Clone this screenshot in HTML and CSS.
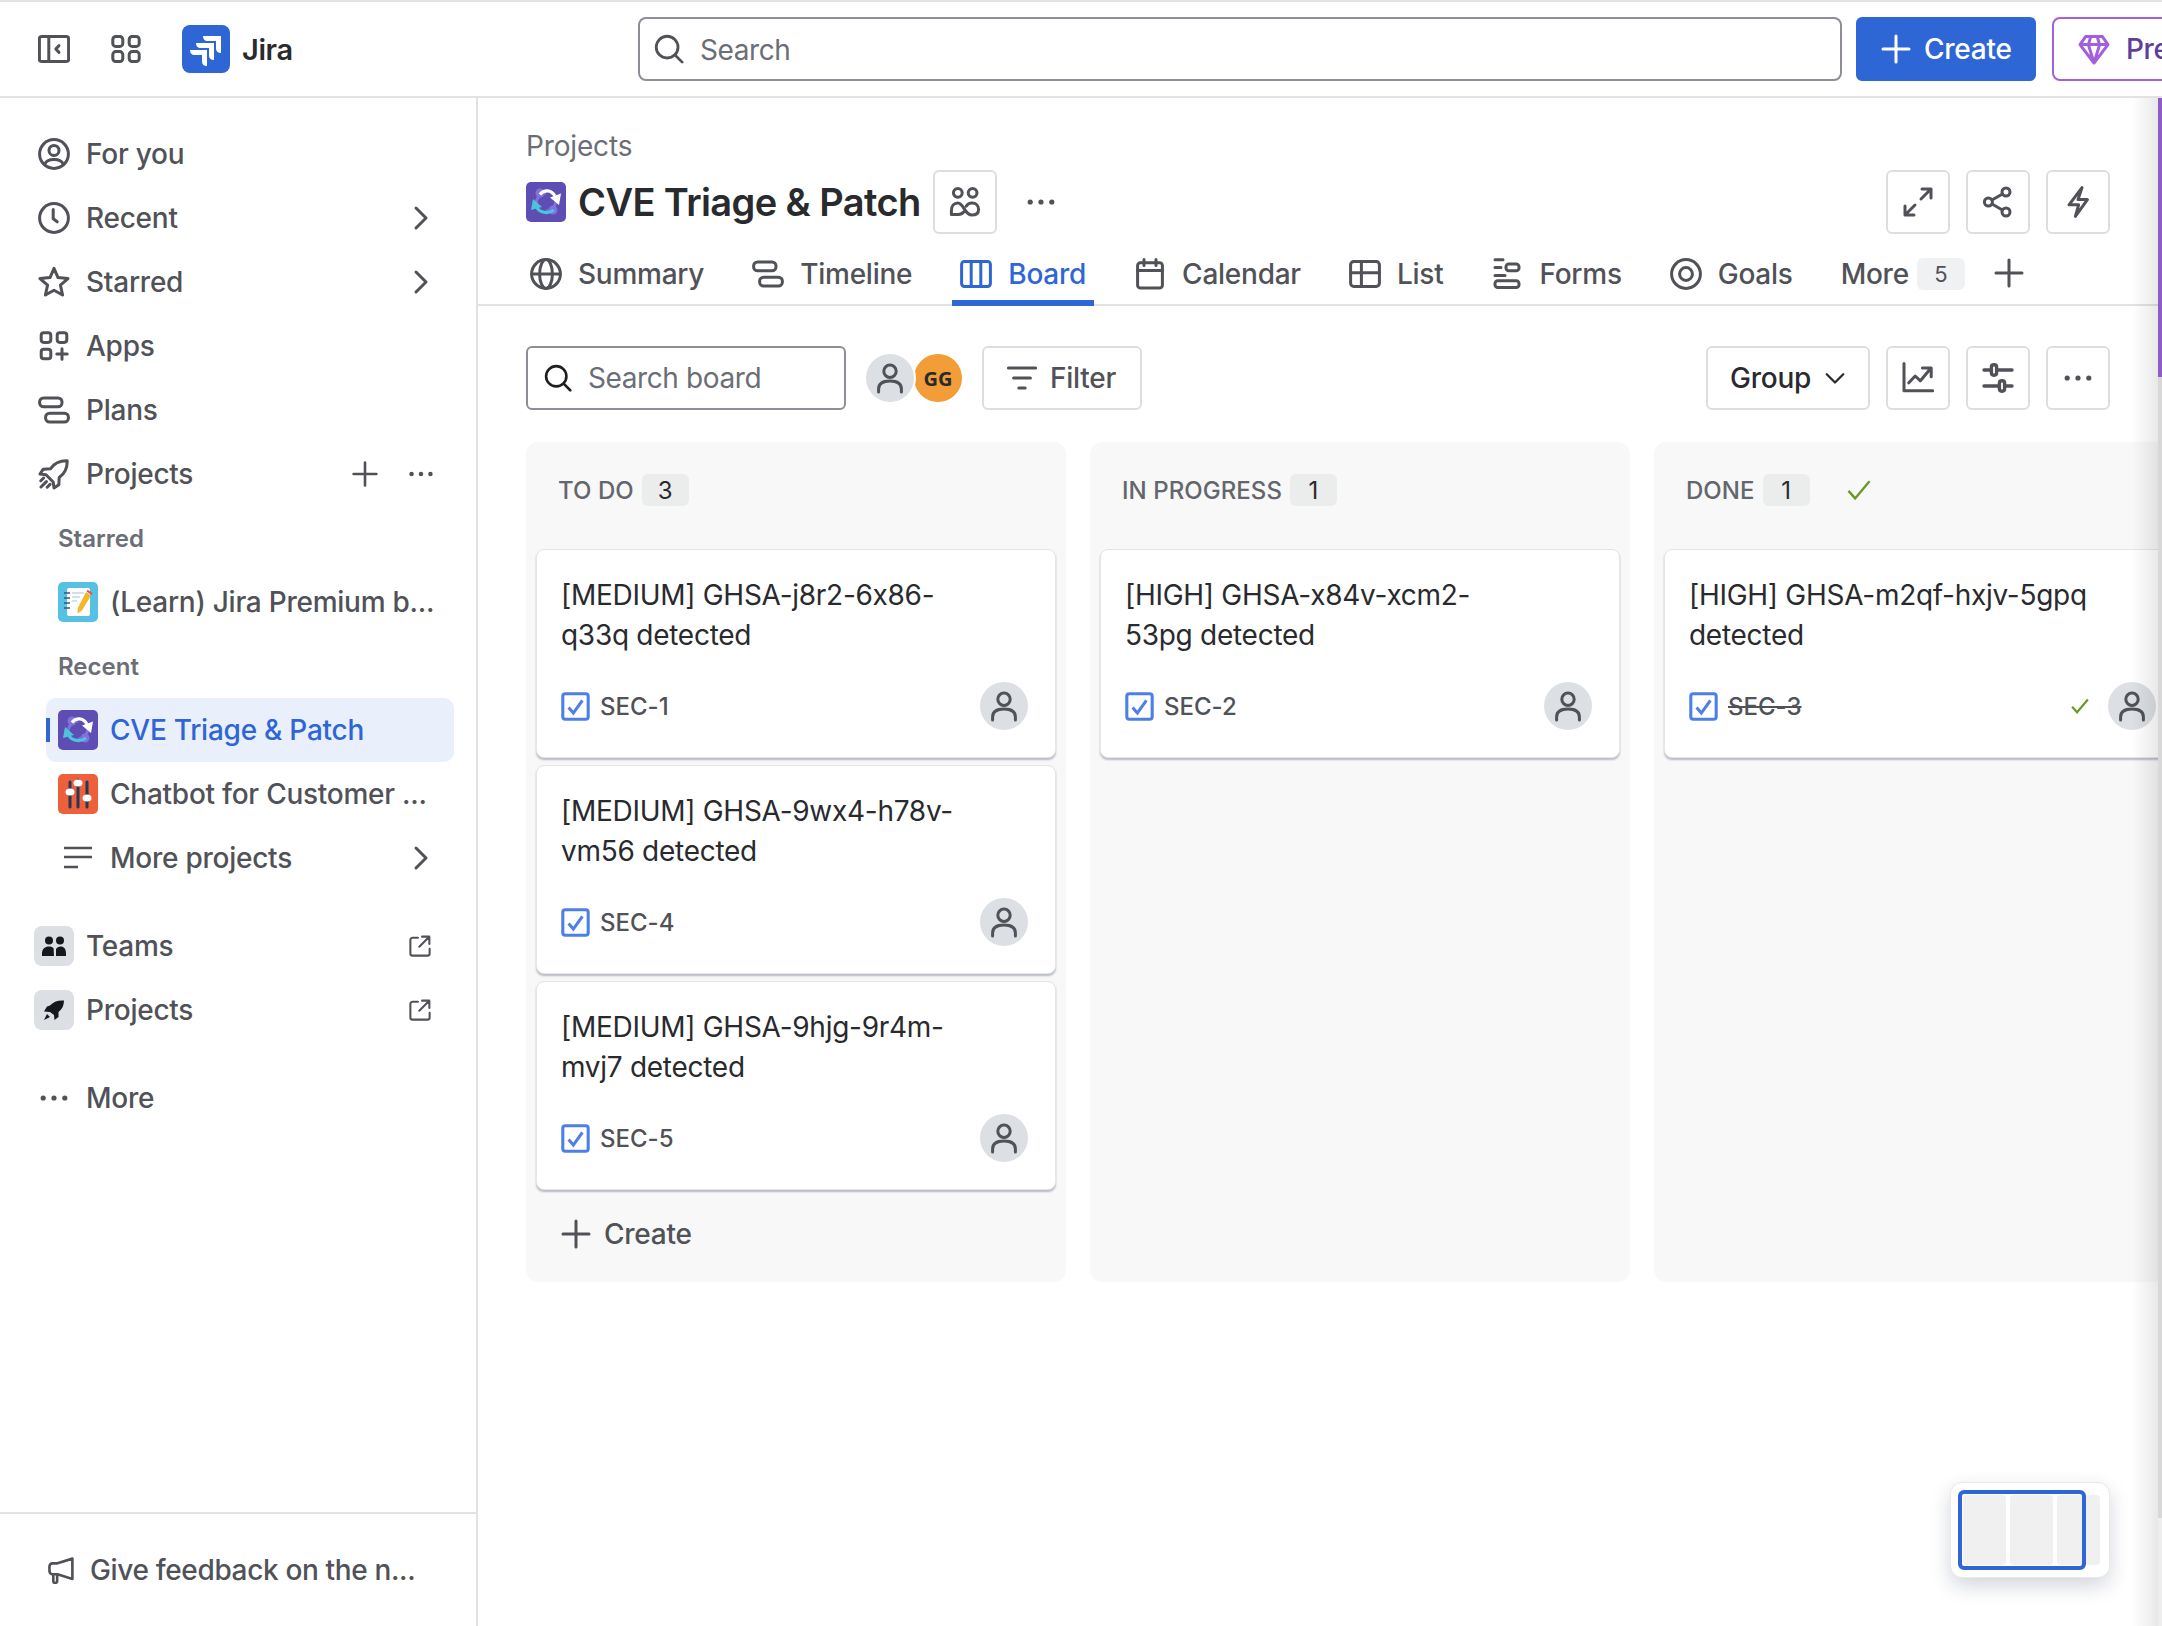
FILE: index.html
```html
<!DOCTYPE html>
<html lang="en">
<head>
    <meta charset="UTF-8">
    <meta name="viewport" content="width=device-width, initial-scale=1.0">
    <title>CVE Triage &amp; Patch - Board - Jira</title>
    <link rel="stylesheet" href="styles.css">
</head>
<body>
    <!-- icon sprite -->
    <svg class="sprite" xmlns="http://www.w3.org/2000/svg">
        <symbol id="i-panel" viewBox="0 0 16 16"><rect x=".7" y="1.7" width="14.6" height="12.6" rx="1.2"/><path d="M5.4 1.700v12.600M10.500 6.300 8.900 8l1.600 1.700"/></symbol>
        <symbol id="i-apps" viewBox="0 0 16 16"><rect x="1.4" y="1.7" width="5" height="5" rx="1.5"/><rect x="9.6" y="1.7" width="5" height="5" rx="1.5"/><rect x="1.4" y="9.3" width="5" height="5" rx="1.5"/><rect x="9.6" y="9.3" width="5" height="5" rx="1.5"/></symbol>
        <symbol id="i-foryou" viewBox="0 0 16 16"><circle cx="8" cy="8" r="7.2"/><circle cx="8" cy="6.2" r="2.5"/><path d="M3.4 13.2c.6-1.8 2.4-2.4 4.6-2.4s4 .6 4.6 2.4"/></symbol>
        <symbol id="i-clock" viewBox="0 0 16 16"><circle cx="8" cy="8" r="7.2"/><path d="M7.6 3.8v4.6l2 1.5"/></symbol>
        <symbol id="i-star" viewBox="0 0 16 16"><path d="M8 1.2l2 4.6 5 .5-3.800 3.300 1.100 4.900L8 12.100l-4.300 2.400 1.100-4.900L1 6.300l5-.5z"/></symbol>
        <symbol id="i-appsadd" viewBox="0 0 16 16"><rect x="1.6" y="1.4" width="4.8" height="4.8" rx="1.3"/><rect x="9.6" y="1.4" width="4.8" height="4.8" rx="1.3"/><rect x="1.6" y="9.6" width="4.8" height="4.8" rx="1.3"/><path d="M12 9.4v5.200M9.400 12h5.200"/></symbol>
        <symbol id="i-plans" viewBox="0 0 16 16"><rect x=".8" y="2" width="11.2" height="4.4" rx="2"/><rect x="3.8" y="9.6" width="11.4" height="4.4" rx="2"/></symbol>
        <symbol id="i-rocket" viewBox="0 0 16 16"><path d="M6.200 5.400C8 2.800 11 1.300 14.600 1.400c.1 3.600-1.400 6.600-4 8.400l-.2 3.600-2.400 1.600-.4-3-3.600-3.600-3-.4 1.600-2.400zM1.500 14.500l2.700-2.700M4.600 14.600l1.400-1.400M1.400 11.400l1.400-1.400"/></symbol>
        <symbol id="i-chev" viewBox="0 0 16 16"><path d="M5.500 3l5 5-5 5"/></symbol>
        <symbol id="i-chevdown" viewBox="0 0 16 16"><path d="M2.500 5.500 8 11l5.500-5.500"/></symbol>
        <symbol id="i-plus" viewBox="0 0 16 16"><path d="M8 1.500v13M1.500 8h13"/></symbol>
        <symbol id="i-dots" viewBox="0 0 16 16"><g class="solid"><circle cx="2.6" cy="8" r="1.3"/><circle cx="8" cy="8" r="1.3"/><circle cx="13.4" cy="8" r="1.3"/></g></symbol>
        <symbol id="i-globe" viewBox="0 0 16 16"><circle cx="8" cy="8" r="7.2"/><ellipse cx="8" cy="8" rx="3.2" ry="7.2"/><path d="M1 8h14"/></symbol>
        <symbol id="i-columns" viewBox="0 0 16 16"><rect x=".8" y="1.8" width="14.4" height="12.4" rx="1.4"/><path d="M5.600 1.800v12.400M10.400 1.800v12.400"/></symbol>
        <symbol id="i-calendar" viewBox="0 0 16 16"><rect x="1.8" y="2.4" width="12.4" height="12.6" rx="1.4"/><path d="M1.800 6.200h12.400M5 .8v3M11 .8v3"/></symbol>
        <symbol id="i-list" viewBox="0 0 16 16"><rect x=".8" y="1.8" width="14.4" height="12.4" rx="1.6"/><path d="M.8 7.400h14.400M6.200 1.800v12.400"/></symbol>
        <symbol id="i-forms" viewBox="0 0 16 16"><path d="M2 .9h4M2 4.700h3M2 8.800h5"/><rect x="7.5" y="3" width="6.5" height="3.4" rx="1.4"/><rect x="2" y="11.4" width="12" height="3.4" rx="1.4"/></symbol>
        <symbol id="i-goals" viewBox="0 0 16 16"><circle cx="8" cy="8" r="7.2"/><circle cx="8" cy="8" r="3.2"/></symbol>
        <symbol id="i-people" viewBox="0 0 16 16"><circle cx="4.4" cy="3.4" r="2.2"/><circle cx="11.8" cy="3.4" r="2.2"/><path d="M1.200 14.200v-1.800c0-2.500 1.300-3.900 3.200-3.900 3 0 3.400 6 7 6 2.200 0 3.400-1.100 3.400-2.800 0-1.900-1.400-3.200-3.300-3.200-1.300 0-2.300.6-2.900 1.600M1.200 14.200h3.600c1 0 1.900-.4 2.500-1.200"/></symbol>
        <symbol id="i-expand" viewBox="0 0 16 16"><path d="M9.500 6.500l5-5M10 1.500h4.500V6M6.500 9.500l-5 5M1.500 10v4.500H6"/></symbol>
        <symbol id="i-share" viewBox="0 0 16 16"><circle cx="3.2" cy="8" r="2"/><circle cx="12" cy="3" r="2"/><circle cx="12" cy="13" r="2"/><path d="M5 7l5.200-3M5 9l5.200 3"/></symbol>
        <symbol id="i-bolt" viewBox="0 0 16 16"><path d="M10 .8 3.500 9.400h4.800l-1.600 5.800 6-8.400H8z"/></symbol>
        <symbol id="i-search" viewBox="0 0 16 16"><circle cx="7" cy="7" r="5.8"/><path d="M11.200 11.200 15 15"/></symbol>
        <symbol id="i-filter" viewBox="0 0 16 16"><path d="M1.200 3h13.600M3.800 8h8.400M6.400 13h3.200"/></symbol>
        <symbol id="i-chart" viewBox="0 0 16 16"><path d="M1 .8v13.600h14.400M3.400 10.400 6.600 7l2.600 2.400L14 3.600M10.200 3h4.400v4.400"/></symbol>
        <symbol id="i-sliders" viewBox="0 0 16 16"><path d="M1 4h3.500M7.500 4H15M1 12h7.500M11.500 12H15"/><rect x="4.7" y="1.4" width="2.6" height="5.2" rx="1.2"/><rect x="8.7" y="9.4" width="2.6" height="5.2" rx="1.2"/></symbol>
        <symbol id="i-person" viewBox="0 0 16 16"><circle cx="8" cy="4.6" r="3.1"/><path d="M2.300 15v-1.500c0-2.600 2-4 5.700-4s5.700 1.400 5.700 4V15"/></symbol>
        <symbol id="i-external" viewBox="0 0 16 16"><path d="M6.500 2H2.600A1.600 1.600 0 0 0 1 3.600v9.800A1.600 1.600 0 0 0 2.600 15h10.800a1.600 1.600 0 0 0 1.600-1.600V10M7.500 8.500 14.500 1.500M9.500 1.200h5.300v5.300"/></symbol>
        <symbol id="i-megaphone" viewBox="0 0 16 16"><path d="M14.500 1.500v11.600L6 10.400H3.200a1.800 1.800 0 0 1-1.800-1.800V6a1.800 1.800 0 0 1 1.800-1.800H6zM3.600 10.400v3.900a1 1 0 0 0 2.200 0v-3.900"/></symbol>
        <symbol id="i-diamond" viewBox="0 0 16 16"><path d="M3.800 1.800h8.400L15 5.800 8 15 1 5.800zM1 5.800h14M5.200 5.800 8 15l2.800-9.200M5.200 5.800 6.400 1.800M10.800 5.800 9.600 1.800"/></symbol>
        <symbol id="i-task" viewBox="0 0 16 16"><rect x="1" y="1" width="14" height="14" rx="1.4"/><path d="M4.200 8.600l2.600 3L11.800 4.600"/></symbol>
        <symbol id="i-check" viewBox="0 0 16 16"><path d="M1 8.600l4.400 5L15 2.200"/></symbol>

        <symbol id="logo-sync" viewBox="0 0 40 40">
            <rect width="40" height="40" rx="5" fill="#5e4db2"/>
            <circle cx="14" cy="11" r="4.500" fill="#8270db"/><circle cx="27" cy="28" r="4.500" fill="#8270db"/>
            <path d="M10 22c0-6 5-11 10-11" fill="none" stroke="#8270db" stroke-width="3"/>
            <path d="M30 18c0 6-5 11-10 11" fill="none" stroke="#8270db" stroke-width="3"/>
            <path d="M14 12.500C18 7.500 25 7.500 29 14" fill="none" stroke="#fff" stroke-width="3.200"/>
            <path d="M24 15.500 35 11.500 33 23z" fill="#fff"/>
            <path d="M28 28C23 32 14 31.500 10.500 25" fill="none" stroke="#4bc4dc" stroke-width="3.200"/>
            <path d="M7 17 5 28 16 25z" fill="#4bc4dc"/>
        </symbol>
    </svg>

    <header class="topbar">
        <div class="topbar-left">
            <svg class="ico"><use href="#i-panel"/></svg>
            <svg class="ico"><use href="#i-apps"/></svg>
            <div class="brand">
                <svg class="brand-logo" viewBox="0 0 48 48">
                    <rect width="48" height="48" rx="8" fill="#2f66d5"/>
                    <path d="M21 11h18v17c-2.800 0-5-1.500-5-4.500V16H25.500C23 16 21 14 21 11z" fill="#fff"/>
                    <path d="M14 18h18v17c-2.800 0-5-1.500-5-4.500V23h-8.500C16 23 14 21 14 18z" fill="#fff"/>
                    <path d="M8 25h17v16c-2.800 0-5-1.500-5-4.500V30h-7.500C10 30 8 28 8 25z" fill="#fff"/>
                </svg>
                <span class="brand-name">Jira</span>
            </div>
        </div>
        <div class="global-search">
            <svg class="ico ico-search"><use href="#i-search"/></svg>
            <span>Search</span>
        </div>
        <button class="create-btn"><svg class="ico"><use href="#i-plus"/></svg>Create</button>
        <button class="premium-btn"><svg class="ico"><use href="#i-diamond"/></svg>Premium</button>
    </header>

    <div class="layout">
        <aside class="sidebar">
            <nav class="side-nav">
                <a class="side-row"><svg class="ico"><use href="#i-foryou"/></svg><span>For you</span></a>
                <a class="side-row"><svg class="ico"><use href="#i-clock"/></svg><span>Recent</span><svg class="ico side-end"><use href="#i-chev"/></svg></a>
                <a class="side-row"><svg class="ico"><use href="#i-star"/></svg><span>Starred</span><svg class="ico side-end"><use href="#i-chev"/></svg></a>
                <a class="side-row"><svg class="ico"><use href="#i-appsadd"/></svg><span>Apps</span></a>
                <a class="side-row"><svg class="ico"><use href="#i-plans"/></svg><span>Plans</span></a>
                <a class="side-row"><svg class="ico"><use href="#i-rocket"/></svg><span>Projects</span>
                    <svg class="ico ico-28 side-add"><use href="#i-plus"/></svg>
                    <svg class="ico ico-28 side-more"><use href="#i-dots"/></svg>
                </a>

                <div class="side-label">Starred</div>
                <a class="side-row sub">
                    <svg class="proj-logo" viewBox="0 0 40 40">
                        <rect width="40" height="40" rx="5" fill="#57c1e3"/>
                        <rect x="9" y="6" width="23" height="28" rx="2" fill="#fff"/>
                        <path d="M6 11h6M6 16h6M6 21h6M6 26h6" stroke="#33567f" stroke-width="1.600"/>
                        <path d="M14 11h12M14 15h8M14 19h5" stroke="#c4d8ea" stroke-width="1.500"/>
                        <path d="M28 10l5 3.500-9 15-4.500 3 .3-5.500z" fill="#f5b62f"/>
                        <path d="M28.500 9.500l1.200-1.800 5 3.300-1.200 2z" fill="#e2574c"/>
                    </svg>
                    <span>(Learn) Jira Premium b...</span>
                </a>
                <div class="side-label">Recent</div>
                <a class="side-row sub active">
                    <svg class="proj-logo"><use href="#logo-sync"/></svg>
                    <span>CVE Triage &amp; Patch</span>
                </a>
                <a class="side-row sub">
                    <svg class="proj-logo" viewBox="0 0 40 40">
                        <rect width="40" height="40" rx="5" fill="#ee5f3c"/>
                        <path d="M12 8v25M20 6v27M29 8v25" stroke="#253858" stroke-width="3" stroke-linecap="round"/>
                        <ellipse cx="12" cy="18" rx="4.500" ry="3.500" fill="#fff"/>
                        <ellipse cx="20" cy="9" rx="4.500" ry="3.500" fill="#fff"/>
                        <ellipse cx="29" cy="24" rx="4.500" ry="3.500" fill="#fff"/>
                    </svg>
                    <span>Chatbot for Customer ...</span>
                </a>
                <a class="side-row sub more-projects">
                    <svg class="lines-ico" viewBox="0 0 28 24"><path d="M0 2h28M0 11h28M0 21h14"/></svg>
                    <span>More projects</span>
                    <svg class="ico side-end"><use href="#i-chev"/></svg>
                </a>

                <a class="side-row group-start">
                    <span class="tile">
                        <svg class="tile-ico" viewBox="0 0 24 20"><circle cx="7" cy="4.500" r="4"/><circle cx="18" cy="4.500" r="4"/><path d="M0 20v-2.500C0 13 3 10.500 7 10.500c2 0 3.600.6 4.600 1.700L12 20zM14 20v-7c1-1.500 2.500-2.500 4.500-2.500 3.500 0 5.500 2.500 5.500 7V20z"/></svg>
                    </span>
                    <span>Teams</span>
                    <svg class="ico ico-22 side-ext"><use href="#i-external"/></svg>
                </a>
                <a class="side-row">
                    <span class="tile">
                        <svg class="tile-ico" viewBox="0 0 24 20"><path d="M8 5.500C11 2 16 0 22 .5c0 5-2 9-5.500 11.500v5l-4 3-.5-5-4-3-6-.5L5 6.500zM5 14l3 3-6 3z"/></svg>
                    </span>
                    <span>Projects</span>
                    <svg class="ico ico-22 side-ext"><use href="#i-external"/></svg>
                </a>

                <a class="side-row group-start"><svg class="ico"><use href="#i-dots"/></svg><span>More</span></a>
            </nav>
            <div class="side-footer">
                <svg class="ico ico-28"><use href="#i-megaphone"/></svg>
                <span>Give feedback on the n...</span>
            </div>
        </aside>

        <main class="main">
            <div class="crumb">Projects</div>
            <div class="title-row">
                <svg class="proj-logo"><use href="#logo-sync"/></svg>
                <h1>CVE Triage &amp; Patch</h1>
                <button class="square-btn"><svg class="ico"><use href="#i-people"/></svg></button>
                <svg class="ico title-dots"><use href="#i-dots"/></svg>
                <div class="title-actions">
                    <button class="square-btn"><svg class="ico"><use href="#i-expand"/></svg></button>
                    <button class="square-btn"><svg class="ico"><use href="#i-share"/></svg></button>
                    <button class="square-btn"><svg class="ico"><use href="#i-bolt"/></svg></button>
                </div>
            </div>

            <div class="tabs">
                <a class="tab"><svg class="ico"><use href="#i-globe"/></svg>Summary</a>
                <a class="tab"><svg class="ico"><use href="#i-plans"/></svg>Timeline</a>
                <a class="tab active"><svg class="ico"><use href="#i-columns"/></svg>Board</a>
                <a class="tab"><svg class="ico"><use href="#i-calendar"/></svg>Calendar</a>
                <a class="tab"><svg class="ico"><use href="#i-list"/></svg>List</a>
                <a class="tab"><svg class="ico"><use href="#i-forms"/></svg>Forms</a>
                <a class="tab"><svg class="ico"><use href="#i-goals"/></svg>Goals</a>
                <a class="tab tab-more">More<span class="more-count">5</span></a>
                <svg class="ico tab-plus"><use href="#i-plus"/></svg>
            </div>

            <div class="toolbar">
                <div class="board-search">
                    <svg class="ico ico-28"><use href="#i-search"/></svg>
                    <span>Search board</span>
                </div>
                <div class="avatars">
                    <span class="avatar"><svg class="ico"><use href="#i-person"/></svg></span>
                    <span class="avatar-gg">GG</span>
                </div>
                <button class="tool-btn filter-btn"><svg class="ico"><use href="#i-filter"/></svg>Filter</button>
                <div class="toolbar-right">
                    <button class="tool-btn group-btn">Group<svg class="ico ico-24"><use href="#i-chevdown"/></svg></button>
                    <button class="square-btn"><svg class="ico"><use href="#i-chart"/></svg></button>
                    <button class="square-btn"><svg class="ico ico-sliders"><use href="#i-sliders"/></svg></button>
                    <button class="square-btn"><svg class="ico"><use href="#i-dots"/></svg></button>
                </div>
            </div>

            <div class="board">
                <section class="column">
                    <div class="col-head"><span class="col-name">TO DO</span><span class="col-count">3</span></div>
                    <article class="card">
                        <p class="card-title">[MEDIUM] GHSA-j8r2-6x86-q33q detected</p>
                        <div class="card-foot">
                            <svg class="task-ico"><use href="#i-task"/></svg><span class="card-key">SEC-1</span>
                            <span class="avatar"><svg class="ico"><use href="#i-person"/></svg></span>
                        </div>
                    </article>
                    <article class="card">
                        <p class="card-title">[MEDIUM] GHSA-9wx4-h78v-vm56 detected</p>
                        <div class="card-foot">
                            <svg class="task-ico"><use href="#i-task"/></svg><span class="card-key">SEC-4</span>
                            <span class="avatar"><svg class="ico"><use href="#i-person"/></svg></span>
                        </div>
                    </article>
                    <article class="card">
                        <p class="card-title">[MEDIUM] GHSA-9hjg-9r4m-mvj7 detected</p>
                        <div class="card-foot">
                            <svg class="task-ico"><use href="#i-task"/></svg><span class="card-key">SEC-5</span>
                            <span class="avatar"><svg class="ico"><use href="#i-person"/></svg></span>
                        </div>
                    </article>
                    <div class="col-create"><svg class="ico"><use href="#i-plus"/></svg>Create</div>
                </section>

                <section class="column">
                    <div class="col-head"><span class="col-name">IN PROGRESS</span><span class="col-count">1</span></div>
                    <article class="card">
                        <p class="card-title">[HIGH] GHSA-x84v-xcm2-53pg detected</p>
                        <div class="card-foot">
                            <svg class="task-ico"><use href="#i-task"/></svg><span class="card-key">SEC-2</span>
                            <span class="avatar"><svg class="ico"><use href="#i-person"/></svg></span>
                        </div>
                    </article>
                </section>

                <section class="column">
                    <div class="col-head"><span class="col-name">DONE</span><span class="col-count">1</span><svg class="col-check"><use href="#i-check"/></svg></div>
                    <article class="card">
                        <p class="card-title">[HIGH] GHSA-m2qf-hxjv-5gpq detected</p>
                        <div class="card-foot">
                            <svg class="task-ico"><use href="#i-task"/></svg><span class="card-key done">SEC-3</span>
                            <svg class="card-check"><use href="#i-check"/></svg>
                            <span class="avatar"><svg class="ico"><use href="#i-person"/></svg></span>
                        </div>
                    </article>
                </section>
            </div>

            <div class="minimap">
                <span class="mini-col"></span><span class="mini-col"></span><span class="mini-col"></span>
                <span class="mini-frame"></span>
            </div>
            <div class="edge-shade"></div>
            <div class="edge-bar"></div>
        </main>
    </div>
</body>
</html>
```

FILE: styles.css
```css
* {
    box-sizing: border-box;
}
html, body {
    margin: 0;
    height: 100%;
}
body {
    width: 2162px;
    height: 1626px;
    overflow: hidden;
    background: #fff;
    color: #505258;
    font-family: Inter, "Noto Sans", sans-serif;
    font-size: 28px;
    letter-spacing: -0.4px;
    font-feature-settings: "calt" 0;
    white-space: nowrap;
}
button {
    font-family: inherit;
    font-size: 28px;
    font-feature-settings: inherit;
    letter-spacing: inherit;
    color: #505258;
    background: #fff;
    cursor: pointer;
}
.sprite {
    display: none;
}

/* icons */
.ico {
    width: 32px;
    height: 32px;
    flex: none;
    fill: none;
    stroke: currentColor;
    stroke-width: 1.5;
    stroke-linecap: round;
    stroke-linejoin: round;
}
.ico-28 { width: 28px; height: 28px; }
.ico-24 { width: 24px; height: 24px; }
.ico-22 { width: 22px; height: 22px; }
.ico-sliders { stroke-width: 1.7; }
.solid {
    fill: currentColor;
    stroke: none;
}

/* top bar */
.topbar {
    display: flex;
    align-items: center;
    height: 98px;
    border-top: 2px solid #e2e2e2;
    border-bottom: 2px solid #e2e2e2;
    overflow: hidden;
}
.topbar-left {
    display: flex;
    align-items: center;
    gap: 40px;
    flex: 0 0 638px;
    padding-left: 38px;
}
.brand {
    display: flex;
    align-items: center;
    gap: 12px;
}
.brand-logo {
    width: 48px;
    height: 48px;
}
.brand-name {
    font-size: 29px;
    font-weight: 600;
    color: #292a2e;
}
.global-search {
    display: flex;
    align-items: center;
    gap: 16px;
    flex: 0 0 1204px;
    height: 64px;
    padding-left: 14px;
    border: 2px solid #8c8f97;
    border-radius: 8px;
    color: #6b6e76;
}
.global-search span {
    padding-top: 2px;
}
.ico-search {
    width: 30px;
    height: 30px;
    color: #505258;
}
.create-btn {
    display: flex;
    align-items: center;
    gap: 12px;
    flex: 0 0 180px;
    height: 64px;
    margin-left: 14px;
    padding: 0 0 0 24px;
    border: 0;
    border-radius: 6px;
    background: #2f66d5;
    color: #fff;
    font-weight: 500;
    letter-spacing: -0.25px;
}
.premium-btn {
    display: flex;
    align-items: center;
    gap: 16px;
    flex: none;
    height: 64px;
    margin-left: 16px;
    padding: 0 24px;
    border: 2px solid #a35fdc;
    border-radius: 8px;
    color: #5e3d9c;
    font-weight: 500;
}
.premium-btn .ico {
    color: #a35fdc;
}

/* layout */
.layout {
    display: flex;
    height: 1528px;
}
.sidebar {
    display: flex;
    flex-direction: column;
    flex: 0 0 478px;
    border-right: 2px solid #e2e2e2;
}
.side-nav {
    padding-top: 24px;
}
.side-row {
    display: flex;
    align-items: center;
    gap: 16px;
    height: 64px;
    padding: 0 40px 0 38px;
    font-weight: 500;
    letter-spacing: -0.25px;
}
.side-end {
    margin-left: auto;
    margin-right: -1px;
}
.side-add {
    margin-left: auto;
    margin-right: 12px;
}
.side-more {
    margin-right: 1px;
}
.side-ext {
    margin-left: auto;
    margin-right: 5px;
}
.side-label {
    display: flex;
    align-items: center;
    height: 64px;
    padding-left: 58px;
    font-size: 24px;
    font-weight: 600;
    color: #6b6e76;
    letter-spacing: 0;
}
.side-row.sub {
    position: relative;
    gap: 12px;
    margin: 0 22px 0 46px;
    padding: 0 18px 0 12px;
}
.side-row.active {
    border-radius: 10px;
    background: #e9f0fc;
    color: #2f66d5;
}
.side-row.active::before {
    content: "";
    position: absolute;
    left: 0;
    top: 20px;
    width: 4px;
    height: 24px;
    background: #2f66d5;
}
.proj-logo {
    width: 40px;
    height: 40px;
    flex: none;
}
.lines-ico {
    width: 28px;
    height: 24px;
    flex: none;
    margin: 0 6px;
    fill: none;
    stroke: currentColor;
    stroke-width: 2.5;
}
.group-start {
    margin-top: 24px;
}
.tile {
    display: flex;
    align-items: center;
    justify-content: center;
    width: 40px;
    height: 40px;
    flex: none;
    margin-left: -4px;
    margin-right: -4px;
    border-radius: 8px;
    background: #dcdfe4;
}
.tile-ico {
    width: 24px;
    height: 20px;
    fill: #16181d;
}
.side-footer {
    display: flex;
    align-items: center;
    gap: 15px;
    margin-top: auto;
    height: 114px;
    padding-left: 47px;
    border-top: 2px solid #e2e2e2;
    font-weight: 500;
    letter-spacing: -0.35px;
}

/* main */
.main {
    position: relative;
    flex: 1;
    min-width: 0;
    overflow: hidden;
}
.crumb {
    height: 40px;
    margin: 28px 0 4px 48px;
    line-height: 40px;
    color: #6b6e76;
    letter-spacing: -0.15px;
}
.title-row {
    display: flex;
    align-items: center;
    height: 64px;
    padding: 0 52px 0 48px;
}
.title-row h1 {
    margin: 0 12px;
    font-size: 38px;
    font-weight: 600;
    color: #292a2e;
    letter-spacing: -0.6px;
}
.square-btn {
    display: flex;
    align-items: center;
    justify-content: center;
    width: 64px;
    height: 64px;
    flex: none;
    padding: 0;
    border: 2px solid #dddee1;
    border-radius: 6px;
    color: #505258;
}
.title-dots {
    margin-left: 28px;
}
.title-actions, .toolbar-right {
    display: flex;
    gap: 16px;
    margin-left: auto;
}

/* tabs */
.tabs {
    display: flex;
    align-items: center;
    gap: 32px;
    height: 64px;
    margin-top: 8px;
    padding-left: 44px;
    border-bottom: 2px solid #e2e2e2;
}
.tab {
    position: relative;
    display: flex;
    align-items: center;
    gap: 16px;
    height: 62px;
    padding: 2px 8px 0;
    font-weight: 500;
    letter-spacing: -0.25px;
}
.tab.active {
    color: #2f66d5;
}
.tab.active::after {
    content: "";
    position: absolute;
    left: 0;
    right: 0;
    bottom: -2px;
    height: 6px;
    background: #2f66d5;
}
.tab-more {
    gap: 8px;
}
.more-count {
    display: flex;
    align-items: center;
    justify-content: center;
    width: 48px;
    height: 32px;
    border-radius: 6px;
    background: #f0f1f2;
    font-size: 22px;
    font-weight: 400;
}
.tab-plus {
    margin-left: -12px;
}

/* board toolbar */
.toolbar {
    display: flex;
    align-items: center;
    height: 64px;
    margin-top: 40px;
    padding: 0 52px 0 48px;
}
.board-search {
    display: flex;
    align-items: center;
    gap: 16px;
    width: 320px;
    height: 64px;
    padding-left: 16px;
    border: 2px solid #8c8f97;
    border-radius: 6px;
    color: #6b6e76;
}
.board-search .ico {
    color: #1e1f21;
}
.avatars {
    display: flex;
    margin: 0 20px;
}
.avatar {
    position: relative;
    display: flex;
    align-items: center;
    justify-content: center;
    width: 48px;
    height: 48px;
    flex: none;
    border-radius: 50%;
    background: #dcdfe4;
    color: #505258;
}
.avatars .avatar {
    z-index: 1;
    box-shadow: 0 0 0 2px #fff;
}
.avatar-gg {
    display: flex;
    align-items: center;
    justify-content: center;
    width: 48px;
    height: 48px;
    border-radius: 50%;
    background: #f29d38;
    color: #292a2e;
    font-family: "Noto Sans", sans-serif;
    font-size: 20px;
    font-weight: 700;
    letter-spacing: 0;
}
.tool-btn {
    display: flex;
    align-items: center;
    height: 64px;
    padding: 0;
    border: 2px solid #dddee1;
    border-radius: 6px;
    font-weight: 500;
    letter-spacing: -0.25px;
}
.filter-btn {
    gap: 12px;
    width: 160px;
    padding-left: 22px;
}
.group-btn {
    gap: 12px;
    width: 164px;
    padding-left: 22px;
    color: #292a2e;
}

/* columns */
.board {
    display: flex;
    gap: 24px;
    margin-top: 32px;
    padding-left: 48px;
}
.column {
    flex: 0 0 540px;
    height: 840px;
    padding: 0 10px;
    border-radius: 12px;
    background: #f8f8f8;
}
.col-head {
    display: flex;
    align-items: center;
    gap: 8px;
    height: 96px;
    margin-bottom: 11px;
    padding-left: 22px;
    font-size: 24px;
    letter-spacing: 0.05px;
}
.col-name {
    font-weight: 500;
    color: #63666d;
}
.col-count {
    display: flex;
    align-items: center;
    justify-content: center;
    width: 47px;
    height: 32px;
    border-radius: 6px;
    background: #ebeded;
    color: #292a2e;
}
.col-check {
    width: 24px;
    height: 24px;
    margin-left: 29px;
    fill: none;
    stroke: #6a9a23;
    stroke-width: 1.6;
}
.card {
    height: 209px;
    margin-bottom: 7px;
    padding: 25px 27px 0 24px;
    border: 1px solid #e6e6e6;
    border-radius: 8px;
    background: #fff;
    box-shadow: 0 2px 2px rgba(9, 30, 66, 0.28);
}
.card-title {
    max-width: 400px;
    height: 80px;
    margin: 0 0 27px;
    line-height: 40px;
    color: #292a2e;
    letter-spacing: -0.28px;
    white-space: normal;
}
.card-foot {
    display: flex;
    align-items: center;
    height: 48px;
}
.task-ico {
    width: 29px;
    height: 29px;
    flex: none;
    margin-right: 10px;
    fill: none;
    stroke: #4c7fe8;
    stroke-width: 1.7;
}
.card-key {
    font-size: 24px;
    font-weight: 500;
    letter-spacing: 0;
    margin-right: auto;
}
.card-key.done {
    text-decoration: line-through;
}
.card-check {
    width: 18px;
    height: 18px;
    margin-right: 19px;
    fill: none;
    stroke: #6a9a23;
    stroke-width: 1.9;
}
.col-create {
    display: flex;
    align-items: center;
    gap: 12px;
    height: 64px;
    margin-top: 12px;
    padding-left: 24px;
    font-weight: 500;
    letter-spacing: -0.25px;
}

/* minimap and right edge overlays */
.minimap {
    position: absolute;
    left: 1472px;
    top: 1384px;
    display: flex;
    gap: 4px;
    width: 160px;
    height: 96px;
    padding: 12px;
    border: 1px solid #e8e8e8;
    border-radius: 12px;
    background: #fff;
    box-shadow: 0 8px 20px rgba(9, 30, 66, 0.18);
}
.mini-col {
    flex: 0 0 43px;
    border-radius: 4px;
    background: #f0f0f0;
}
.mini-frame {
    position: absolute;
    left: 7px;
    top: 7px;
    width: 128px;
    height: 80px;
    border: 4px solid #2f66d5;
    border-radius: 6px;
}
.edge-shade {
    position: absolute;
    right: 4px;
    top: 0;
    bottom: 0;
    width: 26px;
    background: linear-gradient(to right, rgba(0, 0, 0, 0), rgba(0, 0, 0, 0.09));
}
.edge-bar {
    position: absolute;
    right: 0;
    top: 0;
    bottom: 0;
    width: 4px;
    background: linear-gradient(to bottom, #8f5cc5 0, #8f5cc5 279px, #d8d8d8 279px, #d8d8d8 1420px, #eeeeee 1420px);
}
```
